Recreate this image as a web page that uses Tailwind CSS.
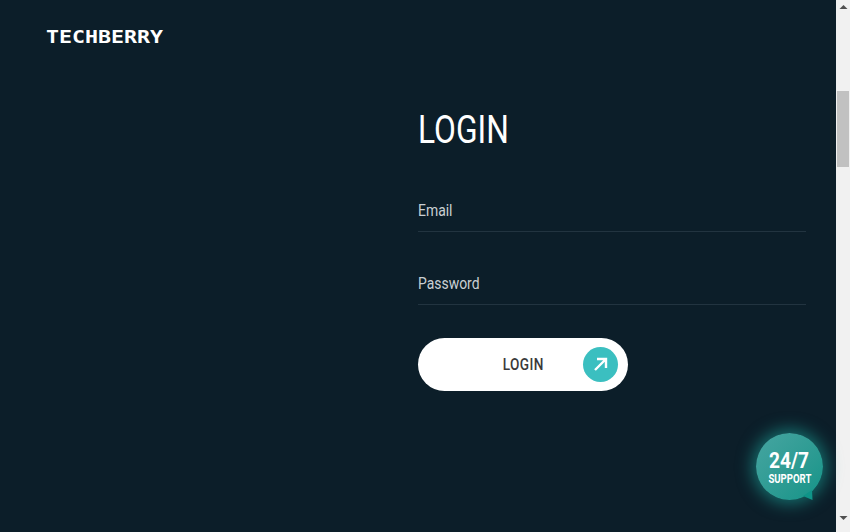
<!DOCTYPE html>
<html lang="en">
<head>
    <meta charset="UTF-8">
    <meta name="viewport" content="width=device-width, initial-scale=1.0">
    <title>Techberry Login</title>
    <script src="https://cdn.jsdelivr.net/npm/@tailwindcss/browser@4"></script>
</head>
<body class="h-[532px] w-[850px] overflow-hidden bg-[#0c1e29] font-['Roboto',sans-serif]">
    <div class="flex h-[532px] w-[850px]">
        <main class="relative flex h-full w-[836px] flex-col bg-[#0c1e29]">
            <header class="h-[90px] pl-[46px] pt-[28px]">
                <a class="block h-[18px] w-[94px] origin-left scale-x-[1.2] font-['DejaVu_Sans_Mono',monospace] text-[18px] leading-[18px] font-bold whitespace-nowrap text-white">TECHBERRY</a>
            </header>

            <section class="ml-[418px] w-[388px]">
                <h1 class="mt-[18px] origin-left scale-x-[0.835] text-[38px] leading-[44px] font-normal text-white">LOGIN</h1>

                <form class="mt-[39px] flex flex-col">
                    <label class="flex h-[41px] items-center border-b border-[#223440] pb-[1px] text-[17px] text-[#c9cfd3]"><span class="origin-left scale-x-[0.82]">Email</span></label>
                    <label class="mt-[32px] flex h-[41px] items-center border-b border-[#223440] pb-[1px] text-[17px] text-[#c9cfd3]"><span class="origin-left scale-x-[0.82]">Password</span></label>
                    <button type="button" class="relative mt-[33px] flex h-[53px] w-[210px] items-center justify-center rounded-full bg-white text-[16px] tracking-[0.5px] text-[#3a3a3a]">
                        <span class="scale-x-[0.85] font-medium">LOGIN</span>
                        <span class="absolute top-[9px] right-[10px] flex h-[35px] w-[35px] items-center justify-center rounded-full bg-[#3bbfc0]">
                            <svg width="17" height="17" viewBox="0 0 17 17" fill="none" stroke="white" stroke-width="2.4">
                                <path d="M3 14 14 3M5 3H14V12" />
                            </svg>
                        </span>
                    </button>
                </form>
            </section>

            <a class="absolute top-[433px] left-[756px] flex h-[67px] w-[67px] flex-col items-center justify-center rounded-full bg-gradient-to-br from-[#45a5a1] to-[#0f9488] pt-[1px] text-white shadow-[0_0_16px_4px_rgba(30,190,175,0.5)]">
                <span class="scale-x-[0.87] text-[22px] leading-[22px] font-bold">24/7</span>
                <span class="mt-[1px] scale-x-[0.8] text-[12px] leading-[12px] font-bold">SUPPORT</span>
                <svg class="absolute top-[55px] left-[45px]" width="14" height="14" viewBox="0 0 14 14"><path d="M2 8 11 2 11.5 12Z" fill="#0f9488" /></svg>
            </a>
        </main>

        <aside class="flex h-full w-[14px] flex-col items-center bg-[#f1f1f1]">
            <svg class="mt-[4px]" width="9" height="6" viewBox="0 0 9 6"><path d="M4.5 1 8.5 5H.5Z" fill="#505050" /></svg>
            <div class="mt-[81px] h-[76px] w-[12px] bg-[#c1c1c1]"></div>
            <svg class="mt-[348px]" width="9" height="6" viewBox="0 0 9 6"><path d="M.5 1H8.5L4.5 5Z" fill="#505050" /></svg>
        </aside>
    </div>
</body>
</html>
